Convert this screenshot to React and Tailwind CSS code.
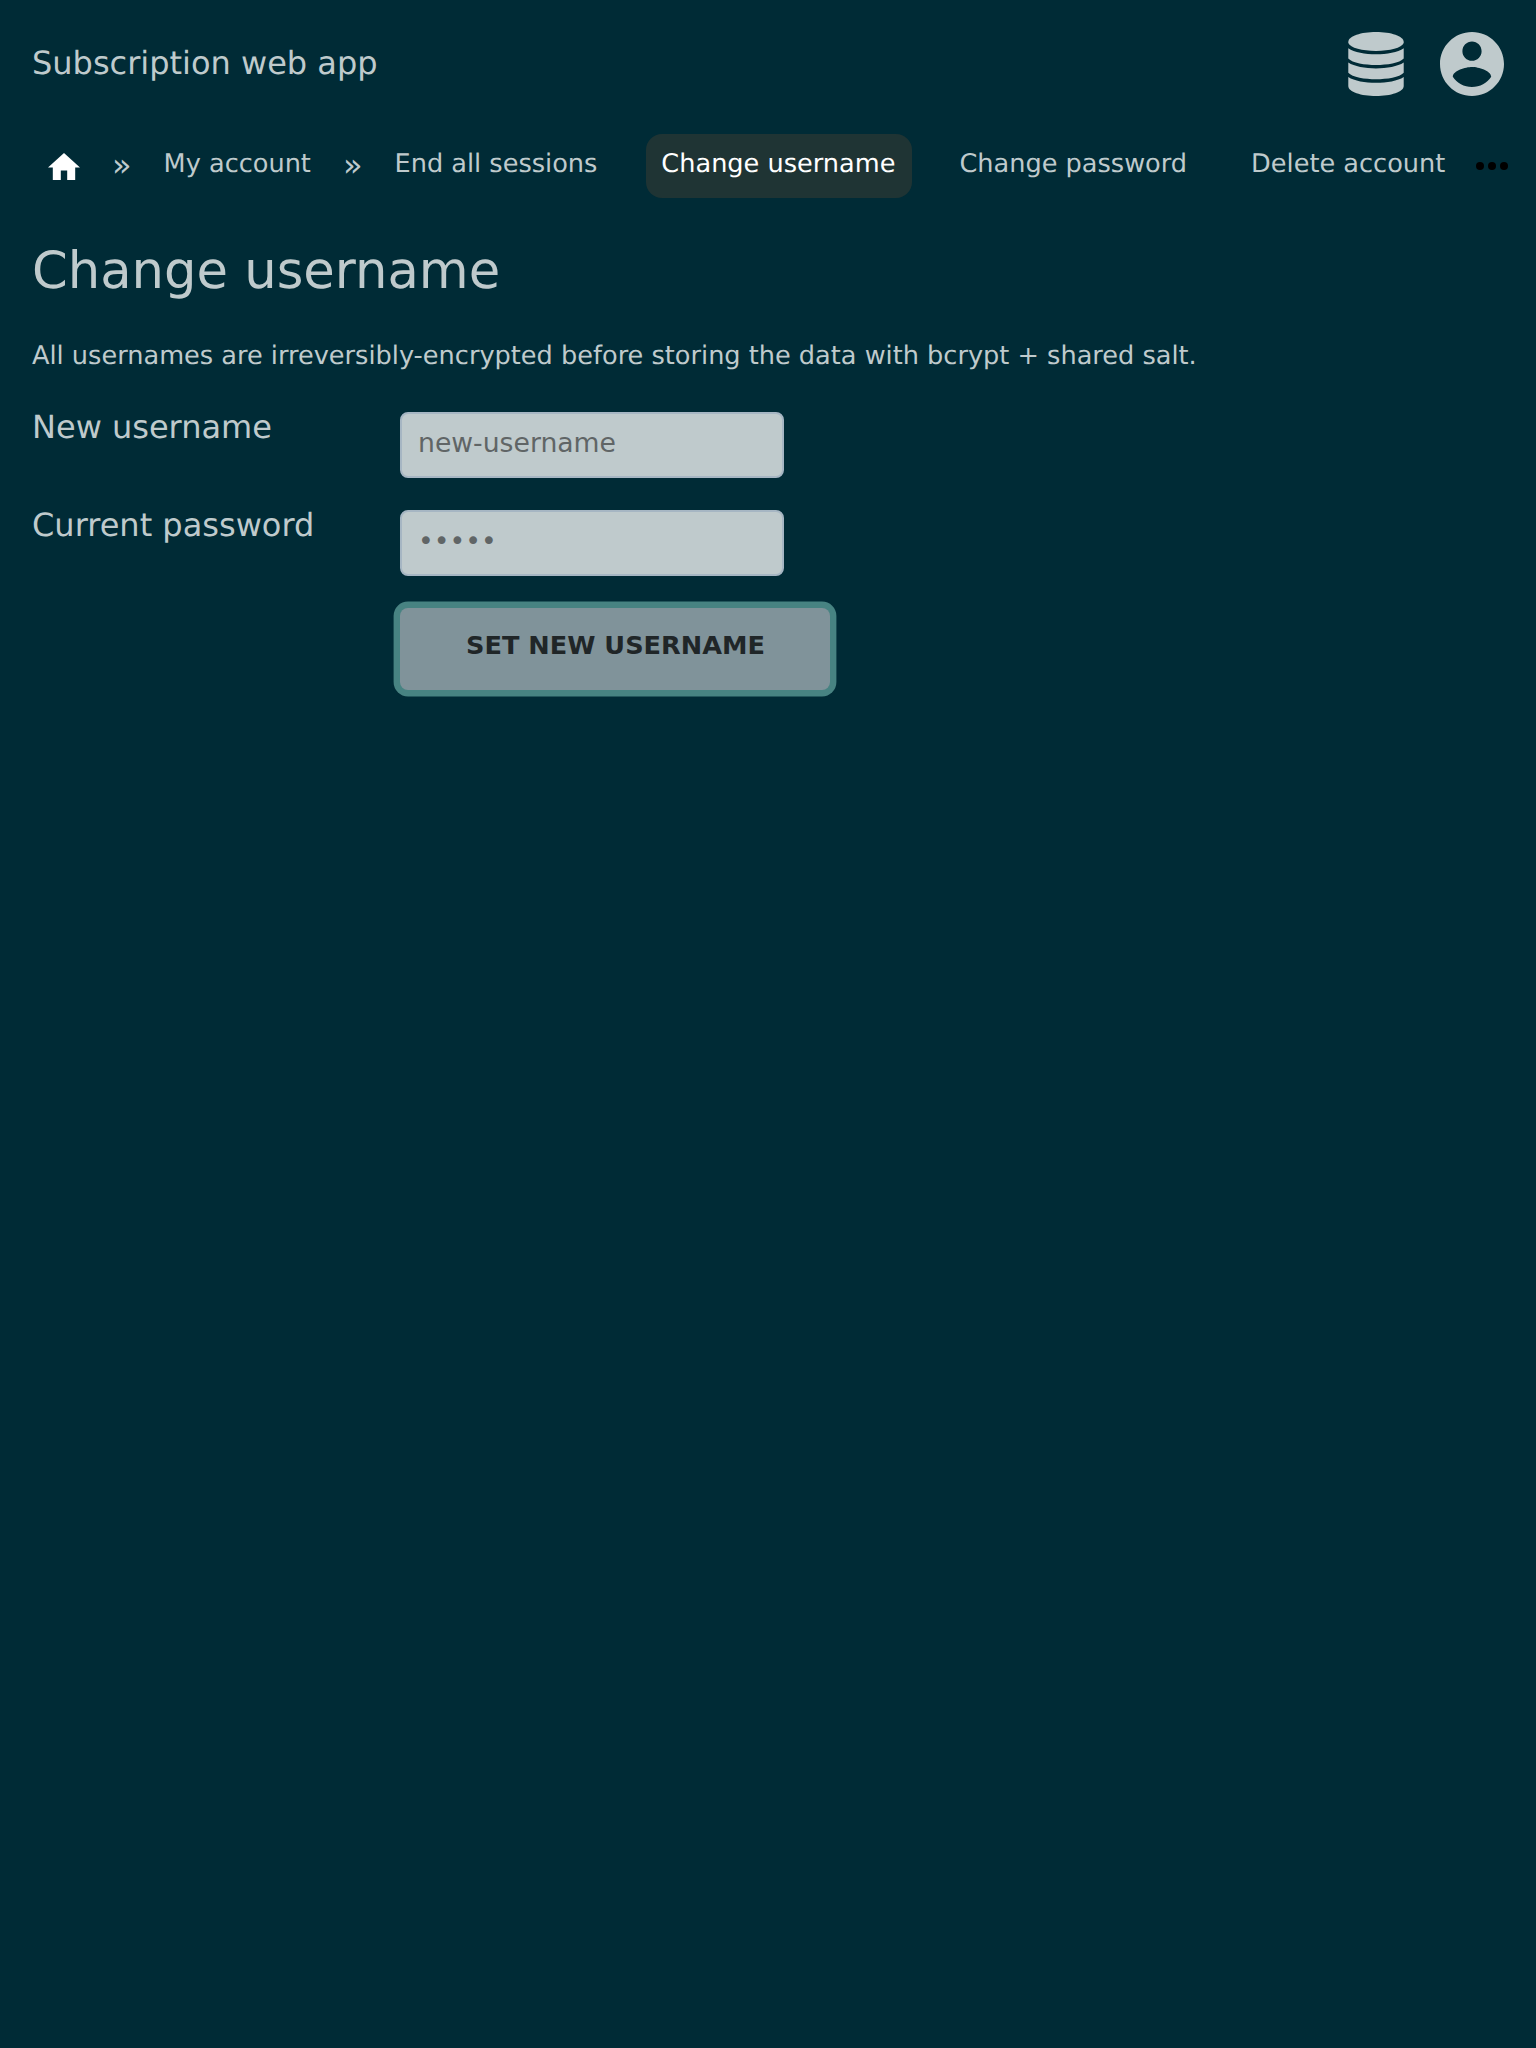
const tab = "text-[25.6px] leading-[32px] whitespace-nowrap";
const field =
  "h-[66px] w-96 rounded-lg border-2 border-[#a6b6c3] bg-[#bfcacc] px-4 pb-[6px] text-[26.667px] placeholder:text-[#606566] placeholder:opacity-100";

function DatabaseIcon() {
  return (
    <svg className="h-16 w-14" viewBox="-0.300 0 56.600 64" preserveAspectRatio="none" fill="currentColor">
      <path d="M28 0C43 0 56 4 56 10V11C54 16 42 18.900 28 18.900S2 16 0 11V10C0 4 13 0 28 0z" />
      <path d="M0 16.200C6 20.200 17 22.200 28 22.200S50 20.200 56 16.200V26.500C52 31 39 33 28 33S4 31 0 26.500z" />
      <path d="M0 30.600C6 34.600 17 36.400 28 36.400S50 34.600 56 30.600V40.800C52 45.300 39 47.300 28 47.300S4 45.300 0 40.800z" />
      <path d="M0 44.900C6 48.900 17 50.700 28 50.700S50 48.900 56 44.900V54C56 60 43 64 28 64S0 60 0 54z" />
    </svg>
  );
}

function AccountIcon() {
  return (
    <svg className="size-16" viewBox="2 2 20 20" fill="currentColor">
      <path d="M12 2C6.480 2 2 6.480 2 12s4.480 10 10 10 10-4.480 10-10S17.520 2 12 2zm0 3c1.660 0 3 1.340 3 3s-1.340 3-3 3-3-1.340-3-3 1.340-3 3-3zm0 14.200c-2.500 0-4.710-1.280-6-3.220.030-1.990 4-3.080 6-3.080 1.990 0 5.970 1.090 6 3.080-1.290 1.940-3.500 3.220-6 3.220z" />
    </svg>
  );
}

function Separator() {
  return <span className="mx-8 mt-[15px] text-[32px] leading-[32px]">»</span>;
}

export default function App() {
  return (
    <div className="min-h-[2048px] w-[1536px] overflow-hidden bg-[#002b36] font-['DejaVu_Sans',sans-serif] text-[#bfcacc] [text-rendering:geometricPrecision]">
      <header className="flex h-32 items-center justify-between px-8">
        <div className="pb-[2px] text-[32px] leading-[40px]">Subscription web app</div>
        <div className="flex gap-9">
          <DatabaseIcon />
          <AccountIcon />
        </div>
      </header>
      <nav className="flex h-[70px] items-start pt-[6px] pl-12">
        <svg className="mt-[18.800px] h-[27.200px] w-8 shrink-0 text-white" viewBox="2 3 20 17" fill="currentColor">
          <path d="M10 20v-6h4v6h5v-8h3L12 3 2 12h3v8z" />
        </svg>
        <Separator />
        <span className={`${tab} mt-[14px]`}>My account</span>
        <Separator />
        <span className={`${tab} mt-[14px]`}>End all sessions</span>
        <span className={`${tab} ml-[48.600px] h-16 rounded-2xl bg-[#1f3434] pt-[14px] pr-[16.400px] pl-[15.400px] text-white`}>Change username</span>
        <span className={`${tab} ml-[47.600px] mt-[14px]`}>Change password</span>
        <span className={`${tab} ml-16 mt-[14px]`}>Delete account</span>
        <svg className="ml-[31px] mt-7 h-2 w-8 shrink-0 text-black" viewBox="0 0 32 8" fill="currentColor">
          <circle cx="4" cy="4" r="4" />
          <circle cx="16" cy="4" r="4" />
          <circle cx="28" cy="4" r="4" />
        </svg>
      </nav>
      <main className="px-8">
        <h1 className="mt-[41px] text-[51.2px] leading-[64px]">Change username</h1>
        <p className="mt-[37px] text-[25.6px] leading-[32px]">
          All usernames are irreversibly-encrypted before storing the data with bcrypt + shared salt.
        </p>
        <form className="mt-[40px] grid grid-cols-[368px_1fr] items-start">
          <label className="-mt-px text-[32px] leading-[32px]">New username</label>
          <input placeholder="new-username" className={`${field} mb-8`} />
          <label className="-mt-px text-[32px] leading-[32px]">Current password</label>
          <input placeholder="•••••" className={field} />
          <button
            type="button"
            className="col-start-2 mt-8 h-[82px] w-[430px] rounded-lg bg-[#80939a] pb-2 pl-px text-[25.6px] font-bold text-[#202628] shadow-[0_0_0_6.400px_#478382]"
          >
            SET NEW USERNAME
          </button>
        </form>
      </main>
    </div>
  );
}
